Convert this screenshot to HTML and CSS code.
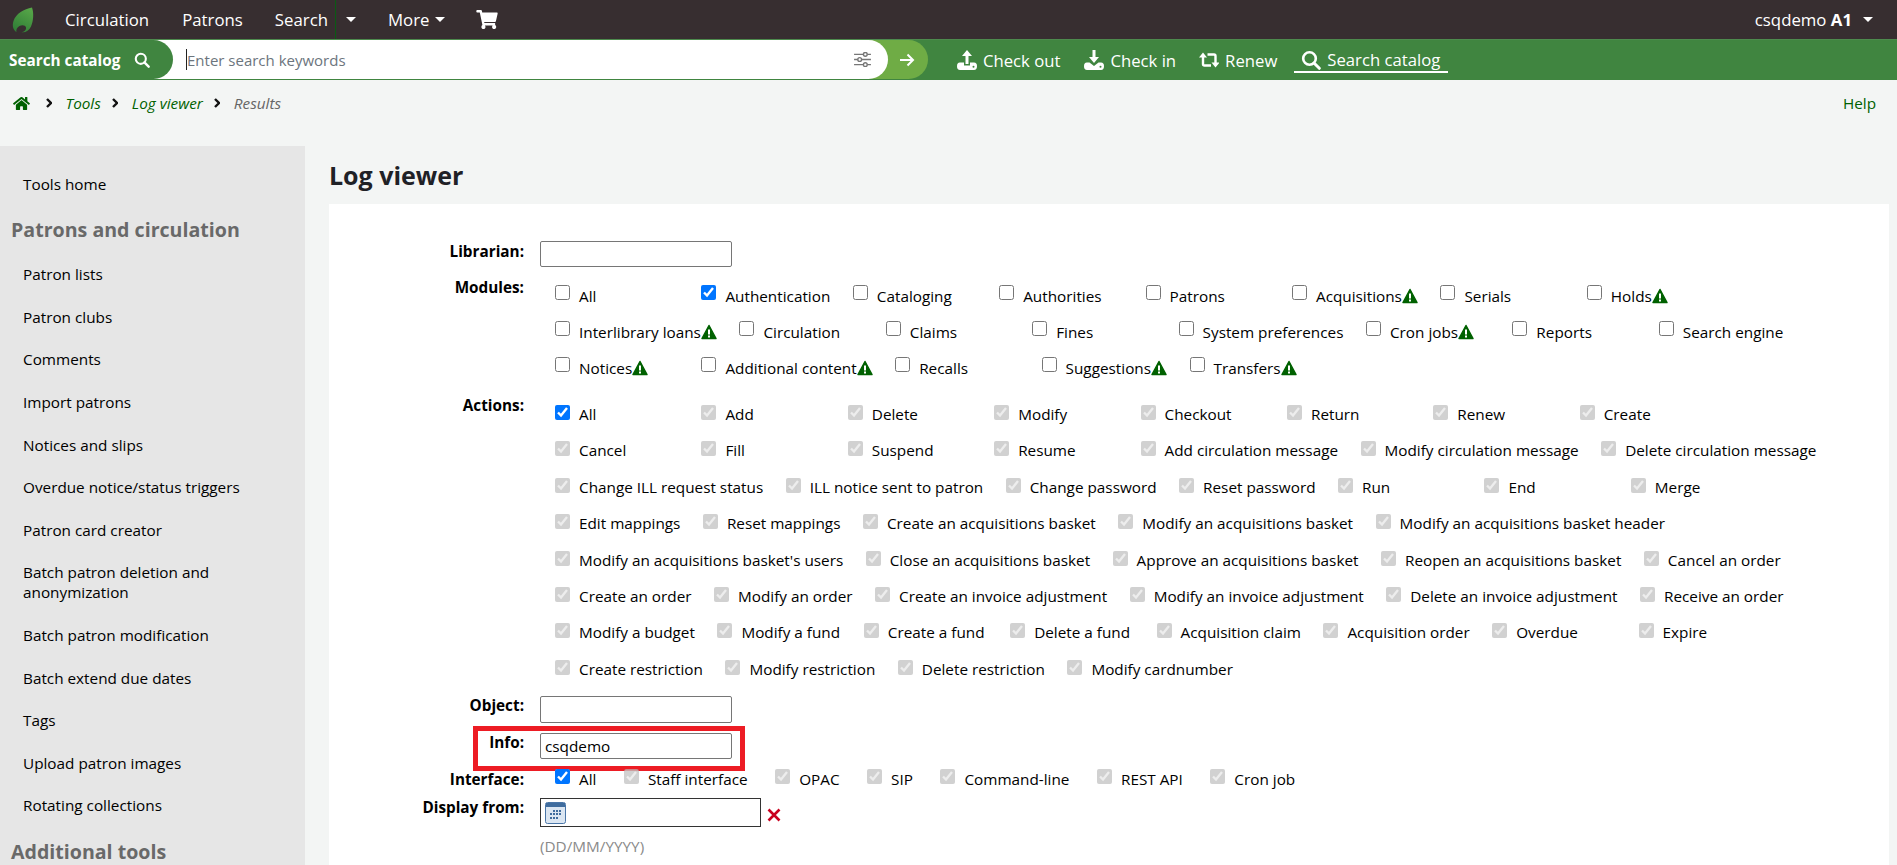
FILE: index.html
```html
<!DOCTYPE html>
<html lang="en">
<head>
  <meta charset="UTF-8" />
  <title>Log viewer</title>
  <link rel="stylesheet" href="styles.css">
</head>
<body>

  <svg class="defs" aria-hidden="true">
    <symbol id="warn" viewBox="0 0 16 16">
      <path d="M8 1.5 15 14.5H1Z" fill="#006100" stroke="#006100" stroke-width="1.5" stroke-linejoin="round"/>
      <rect x="7" y="5.5" width="2" height="5" fill="#fff"/>
      <rect x="7" y="11.5" width="2" height="2" fill="#fff"/>
    </symbol>
    <symbol id="glass" viewBox="0 0 20 20">
      <circle cx="8.5" cy="8.5" r="6.3" fill="none" stroke="#fff" stroke-width="2.6"/>
      <path d="M13 13 18.3 18.3" stroke="#fff" stroke-width="3" stroke-linecap="round"/>
    </symbol>
    <symbol id="caret" viewBox="0 0 10 5">
      <path d="M0 0H10L5 5Z" fill="#fff"/>
    </symbol>
    <symbol id="chevron" viewBox="0 0 6 10">
      <path d="M1 1 5 5 1 9" fill="none" stroke="#111" stroke-width="2.4"/>
    </symbol>
  </svg>

  <!-- Top navigation -->
  <nav class="topnav">
    <svg class="logo" viewBox="0 0 22 26">
      <defs>
        <linearGradient id="leaf" x1="0.7" y1="0" x2="0.2" y2="1">
          <stop offset="0" stop-color="#56a548"/>
          <stop offset="1" stop-color="#2f7d36"/>
        </linearGradient>
      </defs>
      <path d="M20 0.5C22 6 21.5 14 19 19.5 17 24 12.5 26 9.5 25 12 25 14.5 23 14 20.5 13.5 18 10 17.5 7.5 19 5 20.500 3.800 23 4.500 25 1 23 0 18.500 1.500 14 4 6.500 12 2 20 0.500Z" fill="url(#leaf)"/>
    </svg>
    <a class="nav-link nav-circ">Circulation</a>
    <a class="nav-link nav-patrons">Patrons</a>
    <a class="nav-link nav-search">Search</a>
    <span class="nav-split"><svg class="caret"><use href="#caret"/></svg></span>
    <a class="nav-link nav-more">More<svg class="caret"><use href="#caret"/></svg></a>
    <svg class="cart" viewBox="0 0 576 512"><path d="M528.12 301.319l47.273-208C578.806 78.301 567.391 64 551.99 64H159.208l-9.166-44.81C147.758 8.021 137.93 0 126.529 0H24C10.745 0 0 10.745 0 24v16c0 13.255 10.745 24 24 24h69.883l70.248 343.435C147.325 417.1 136 435.222 136 456c0 30.928 25.072 56 56 56s56-25.072 56-56c0-15.674-6.447-29.835-16.824-40h209.647C430.447 426.165 424 440.326 424 456c0 30.928 25.072 56 56 56s56-25.072 56-56c0-22.172-12.888-41.332-31.579-50.405l5.517-24.276c3.413-15.018-8.002-29.319-23.403-29.319H218.117l-6.545-32h293.145c11.206 0 20.92-7.754 23.403-18.681z" fill="#fff"/></svg>
    <a class="nav-user">csqdemo <b>A1</b><svg class="caret"><use href="#caret"/></svg></a>
  </nav>

  <!-- Search bar -->
  <div class="searchbar">
    <div class="search-pill">
      <div class="search-field">
        <div class="search-tab">Search catalog<svg class="glass-sm"><use href="#glass"/></svg></div>
        <span class="search-caret"></span>
        <span class="search-hint">Enter search keywords</span>
        <svg class="sliders" viewBox="0 0 18 16">
          <g fill="#fff" stroke="#777" stroke-width="1.5">
            <path d="M0 2.500H18M0 8H18M0 13.500H18"/>
            <circle cx="12" cy="2.500" r="2"/>
            <circle cx="6" cy="8" r="2"/>
            <circle cx="12" cy="13.500" r="2"/>
          </g>
        </svg>
      </div>
      <svg class="go" viewBox="0 0 16 14"><path d="M1 7H14M8.500 1.500 14 7 8.500 12.500" fill="none" stroke="#fff" stroke-width="2"/></svg>
    </div>
    <a class="quick q-out">
      <svg class="qicon" viewBox="0 0 20 20"><path d="M10 0 15 6H11.500V14H8.500V6H5Z" fill="#fff"/><path d="M3 12.500H7V15.500H13V12.500H17Q20 12.500 20 16.200T17 20H3Q0 20 0 16.200T3 12.500Z" fill="#fff"/><circle cx="16.500" cy="16.800" r="1" fill="#408540"/></svg>
      Check out</a>
    <a class="quick q-in">
      <svg class="qicon" viewBox="0 0 20 20"><path d="M8.500 0H11.500V7H15L10 13 5 7H8.500Z" fill="#fff"/><path d="M3 12.500H5.500L10 16 14.500 12.500H17Q20 12.500 20 16.200T17 20H3Q0 20 0 16.200T3 12.500Z" fill="#fff"/><circle cx="16.500" cy="16.800" r="1" fill="#408540"/></svg>
      Check in</a>
    <a class="quick q-renew">
      <svg class="qicon" viewBox="0 0 20 16"><path d="M4 4V12Q4 13.500 5.500 13.500H12M8.500 2.500H15Q16.500 2.500 16.500 4V12" fill="none" stroke="#fff" stroke-width="2.400"/><path d="M0 5.500 4 0.500 8 5.500ZM12.500 10.500 16.500 15.500 20.500 10.500Z" fill="#fff"/></svg>
      Renew</a>
    <a class="quick q-search">
      <svg class="qicon"><use href="#glass"/></svg>
      Search catalog</a>
  </div>

  <!-- Breadcrumbs -->
  <div class="crumbs">
    <svg class="home" viewBox="0 0 576 512"><path d="M280.37 148.26L96 300.11V464a16 16 0 0 0 16 16l112.06-.29a16 16 0 0 0 15.92-16V368a16 16 0 0 1 16-16h64a16 16 0 0 1 16 16v95.64a16 16 0 0 0 16 16.05L464 480a16 16 0 0 0 16-16V300L295.67 148.26a12.19 12.19 0 0 0-15.3 0zM571.6 251.47L488 182.56V44.05a12 12 0 0 0-12-12h-56a12 12 0 0 0-12 12v72.61L318.47 43a48 48 0 0 0-61 0L4.34 251.47a12 12 0 0 0-1.6 16.9l25.5 31A12 12 0 0 0 45.15 301l235.22-193.74a12.19 12.19 0 0 1 15.3 0L530.9 301a12 12 0 0 0 16.9-1.6l25.5-31a12 12 0 0 0-1.7-16.93z" fill="#006100"/></svg>
    <svg class="chev"><use href="#chevron"/></svg>
    <a>Tools</a>
    <svg class="chev"><use href="#chevron"/></svg>
    <a>Log viewer</a>
    <svg class="chev"><use href="#chevron"/></svg>
    <span class="crumb-last">Results</span>
    <a class="help">Help</a>
  </div>

  <div class="page">

    <!-- Sidebar -->
    <aside class="sidebar">
      <ul>
        <li>Tools home</li>
      </ul>
      <h5>Patrons and circulation</h5>
      <ul>
        <li>Patron lists</li>
        <li>Patron clubs</li>
        <li>Comments</li>
        <li>Import patrons</li>
        <li>Notices and slips</li>
        <li>Overdue notice/status triggers</li>
        <li>Patron card creator</li>
        <li>Batch patron deletion and anonymization</li>
        <li>Batch patron modification</li>
        <li>Batch extend due dates</li>
        <li>Tags</li>
        <li>Upload patron images</li>
        <li>Rotating collections</li>
      </ul>
      <h5>Additional tools</h5>
    </aside>

    <main class="main">
      <h1>Log viewer</h1>
      <div class="panel">

        <div class="field f-librarian">
          <label>Librarian:</label>
          <input class="text" type="text">
        </div>

        <div class="field f-modules">
          <label>Modules:</label>
          <div class="opts">
            <div class="opt-row">
              <span class="opt"><input type="checkbox">All</span>
              <span class="opt"><input type="checkbox" checked>Authentication</span>
              <span class="opt"><input type="checkbox">Cataloging</span>
              <span class="opt"><input type="checkbox">Authorities</span>
              <span class="opt"><input type="checkbox">Patrons</span>
              <span class="opt"><input type="checkbox">Acquisitions<svg class="warn"><use href="#warn"/></svg></span>
              <span class="opt"><input type="checkbox">Serials</span>
              <span class="opt"><input type="checkbox">Holds<svg class="warn"><use href="#warn"/></svg></span>
            </div>
            <div class="opt-row">
              <span class="opt"><input type="checkbox">Interlibrary loans<svg class="warn"><use href="#warn"/></svg></span>
              <span class="opt"><input type="checkbox">Circulation</span>
              <span class="opt"><input type="checkbox">Claims</span>
              <span class="opt"><input type="checkbox">Fines</span>
              <span class="opt"><input type="checkbox">System preferences</span>
              <span class="opt"><input type="checkbox">Cron jobs<svg class="warn"><use href="#warn"/></svg></span>
              <span class="opt"><input type="checkbox">Reports</span>
              <span class="opt"><input type="checkbox">Search engine</span>
            </div>
            <div class="opt-row">
              <span class="opt"><input type="checkbox">Notices<svg class="warn"><use href="#warn"/></svg></span>
              <span class="opt"><input type="checkbox">Additional content<svg class="warn"><use href="#warn"/></svg></span>
              <span class="opt"><input type="checkbox">Recalls</span>
              <span class="opt"><input type="checkbox">Suggestions<svg class="warn"><use href="#warn"/></svg></span>
              <span class="opt"><input type="checkbox">Transfers<svg class="warn"><use href="#warn"/></svg></span>
            </div>
          </div>
        </div>

        <div class="field f-actions">
          <label>Actions:</label>
          <div class="opts">
            <div class="opt-row">
              <span class="opt"><input type="checkbox" checked>All</span>
              <span class="opt"><input type="checkbox" checked disabled>Add</span>
              <span class="opt"><input type="checkbox" checked disabled>Delete</span>
              <span class="opt"><input type="checkbox" checked disabled>Modify</span>
              <span class="opt"><input type="checkbox" checked disabled>Checkout</span>
              <span class="opt"><input type="checkbox" checked disabled>Return</span>
              <span class="opt"><input type="checkbox" checked disabled>Renew</span>
              <span class="opt"><input type="checkbox" checked disabled>Create</span>
            </div>
            <div class="opt-row">
              <span class="opt"><input type="checkbox" checked disabled>Cancel</span>
              <span class="opt"><input type="checkbox" checked disabled>Fill</span>
              <span class="opt"><input type="checkbox" checked disabled>Suspend</span>
              <span class="opt"><input type="checkbox" checked disabled>Resume</span>
              <span class="opt"><input type="checkbox" checked disabled>Add circulation message</span>
              <span class="opt"><input type="checkbox" checked disabled>Modify circulation message</span>
              <span class="opt"><input type="checkbox" checked disabled>Delete circulation message</span>
            </div>
            <div class="opt-row">
              <span class="opt"><input type="checkbox" checked disabled>Change ILL request status</span>
              <span class="opt"><input type="checkbox" checked disabled>ILL notice sent to patron</span>
              <span class="opt"><input type="checkbox" checked disabled>Change password</span>
              <span class="opt"><input type="checkbox" checked disabled>Reset password</span>
              <span class="opt"><input type="checkbox" checked disabled>Run</span>
              <span class="opt"><input type="checkbox" checked disabled>End</span>
              <span class="opt"><input type="checkbox" checked disabled>Merge</span>
            </div>
            <div class="opt-row">
              <span class="opt"><input type="checkbox" checked disabled>Edit mappings</span>
              <span class="opt"><input type="checkbox" checked disabled>Reset mappings</span>
              <span class="opt"><input type="checkbox" checked disabled>Create an acquisitions basket</span>
              <span class="opt"><input type="checkbox" checked disabled>Modify an acquisitions basket</span>
              <span class="opt"><input type="checkbox" checked disabled>Modify an acquisitions basket header</span>
            </div>
            <div class="opt-row">
              <span class="opt"><input type="checkbox" checked disabled>Modify an acquisitions basket's users</span>
              <span class="opt"><input type="checkbox" checked disabled>Close an acquisitions basket</span>
              <span class="opt"><input type="checkbox" checked disabled>Approve an acquisitions basket</span>
              <span class="opt"><input type="checkbox" checked disabled>Reopen an acquisitions basket</span>
              <span class="opt"><input type="checkbox" checked disabled>Cancel an order</span>
            </div>
            <div class="opt-row">
              <span class="opt"><input type="checkbox" checked disabled>Create an order</span>
              <span class="opt"><input type="checkbox" checked disabled>Modify an order</span>
              <span class="opt"><input type="checkbox" checked disabled>Create an invoice adjustment</span>
              <span class="opt"><input type="checkbox" checked disabled>Modify an invoice adjustment</span>
              <span class="opt"><input type="checkbox" checked disabled>Delete an invoice adjustment</span>
              <span class="opt"><input type="checkbox" checked disabled>Receive an order</span>
            </div>
            <div class="opt-row">
              <span class="opt"><input type="checkbox" checked disabled>Modify a budget</span>
              <span class="opt"><input type="checkbox" checked disabled>Modify a fund</span>
              <span class="opt"><input type="checkbox" checked disabled>Create a fund</span>
              <span class="opt"><input type="checkbox" checked disabled>Delete a fund</span>
              <span class="opt"><input type="checkbox" checked disabled>Acquisition claim</span>
              <span class="opt"><input type="checkbox" checked disabled>Acquisition order</span>
              <span class="opt"><input type="checkbox" checked disabled>Overdue</span>
              <span class="opt"><input type="checkbox" checked disabled>Expire</span>
            </div>
            <div class="opt-row">
              <span class="opt"><input type="checkbox" checked disabled>Create restriction</span>
              <span class="opt"><input type="checkbox" checked disabled>Modify restriction</span>
              <span class="opt"><input type="checkbox" checked disabled>Delete restriction</span>
              <span class="opt"><input type="checkbox" checked disabled>Modify cardnumber</span>
            </div>
          </div>
        </div>

        <div class="field f-object">
          <label>Object:</label>
          <input class="text" type="text">
        </div>

        <div class="field f-info">
          <label>Info:</label>
          <input class="text" type="text" value="csqdemo">
          <div class="highlight"></div>
        </div>

        <div class="field f-interface">
          <label>Interface:</label>
          <div class="opts">
            <div class="opt-row iface">
              <span class="opt"><input type="checkbox" checked>All</span>
              <span class="opt"><input type="checkbox" checked disabled>Staff interface</span>
              <span class="opt"><input type="checkbox" checked disabled>OPAC</span>
              <span class="opt"><input type="checkbox" checked disabled>SIP</span>
              <span class="opt"><input type="checkbox" checked disabled>Command-line</span>
              <span class="opt"><input type="checkbox" checked disabled>REST API</span>
              <span class="opt"><input type="checkbox" checked disabled>Cron job</span>
            </div>
          </div>
        </div>

        <div class="field f-date">
          <label>Display from:</label>
          <div class="date-box">
            <svg class="cal" viewBox="0 0 21 22">
              <rect x="0.500" y="0.500" width="20" height="21" rx="2" fill="#dbe6f2" stroke="#4a76a8"/>
              <rect x="1" y="1" width="19" height="4" fill="#3f6c9e"/>
              <g fill="#3f6c9e">
                <rect x="8" y="8" width="2" height="2"/><rect x="11" y="8" width="2" height="2"/><rect x="14" y="8" width="2" height="2"/>
                <rect x="5" y="11" width="2" height="2"/><rect x="8" y="11" width="2" height="2"/><rect x="11" y="11" width="2" height="2"/><rect x="14" y="11" width="2" height="2"/>
                <rect x="5" y="15" width="2" height="2"/><rect x="8" y="15" width="2" height="2"/><rect x="11" y="15" width="2" height="2"/>
              </g>
            </svg>
          </div>
          <svg class="clear" viewBox="0 0 14 14"><path d="M1.500 1.500 12.500 12.500M12.500 1.500 1.500 12.500" stroke="#c9001e" stroke-width="2.600"/></svg>
        </div>
        <div class="hint">(DD/MM/YYYY)</div>

      </div>
    </main>

  </div>

</body>
</html>
```

FILE: styles.css
```css
html, body {
  margin: 0;
  padding: 0;
  height: 865px;
  overflow: hidden;
}

body {
  font-family: "Open Sans", sans-serif;
  font-size: 15.3px;
  color: #000;
  background-color: #f3f5f4;
}

.defs {
  display: none;
}

/* top navigation */
.topnav {
  display: flex;
  align-items: center;
  height: 39px;
  background-color: #372e30;
  color: #fff;
  font-size: 16.8px;
}

.logo {
  width: 22px;
  height: 26px;
  margin-left: 12px;
}

.nav-link {
  white-space: nowrap;
}

.nav-circ { margin-left: 31px; }
.nav-patrons { margin-left: 33px; }
.nav-search { margin-left: 32px; }

.nav-split {
  display: flex;
  align-items: center;
  align-self: stretch;
  margin-left: 7px;
  padding-left: 10px;
  border-left: 1px solid #0a5c14;
}

.nav-more {
  display: flex;
  align-items: center;
  margin-left: 32px;
}

.nav-more .caret { margin-left: 6px; }

.caret {
  width: 10px;
  height: 5px;
}

.cart {
  width: 22px;
  height: 19px;
  margin-left: 31px;
  margin-top: -1px;
}

.nav-user {
  display: flex;
  align-items: center;
  margin-left: auto;
  margin-right: 24px;
  white-space: pre;
}

.nav-user .caret { margin-left: 11px; }

/* search bar */
.searchbar {
  display: flex;
  align-items: center;
  height: 41px;
  background-color: #408540;
  color: #fff;
  border-top: 1px solid #4d8a4d;
  box-sizing: border-box;
}

.search-pill {
  display: flex;
  align-items: center;
  width: 928px;
  height: 39px;
  margin-top: -1px;
  background-color: #6fac45;
  border-radius: 0 20px 20px 0;
}

.search-field {
  display: flex;
  align-items: center;
  width: 888px;
  height: 39px;
  background-color: #fff;
  border-radius: 0 20px 20px 0;
}

.search-tab {
  display: flex;
  align-items: center;
  width: 173px;
  height: 39px;
  padding-left: 9px;
  box-sizing: border-box;
  background-color: #408540;
  border-radius: 0 20px 20px 0;
  font-weight: 700;
  white-space: nowrap;
}

.glass-sm {
  width: 16px;
  height: 16px;
  margin-left: 14px;
}

.search-caret {
  width: 1px;
  height: 21px;
  margin-left: 13px;
  background-color: #222;
}

.search-hint {
  color: #6c757d;
  font-size: 15px;
}

.sliders {
  width: 17px;
  height: 15px;
  margin-left: auto;
  margin-right: 17px;
}

.go {
  width: 16px;
  height: 14px;
  margin-left: 11px;
}

.quick {
  display: flex;
  align-items: center;
  height: 31px;
  font-size: 16.7px;
  white-space: nowrap;
}

.qicon {
  width: 20px;
  height: 20px;
  margin-right: 6px;
}

.q-out { margin-left: 29px; }
.q-in { margin-left: 24px; }
.q-renew { margin-left: 23px; }

.q-search {
  align-self: flex-start;
  height: 23px;
  margin-top: 8px;
  margin-left: 17px;
  padding: 0 8px 0 7px;
  border-bottom: 2px solid #fff;
}

/* breadcrumbs */
.crumbs {
  display: flex;
  align-items: center;
  height: 46px;
  padding: 0 21px 0 13px;
  font-style: italic;
  margin-bottom: 20px;
}

.crumbs a {
  color: #006100;
}

.home {
  width: 17px;
  height: 15px;
}

.chev {
  width: 6px;
  height: 10px;
  margin: 0 13.5px 0 11.5px;
}

.home + .chev {
  margin-left: 16px;
}

.crumb-last {
  color: #666;
}

.crumbs .help {
  margin-left: auto;
  font-style: normal;
}

/* page columns */
.page {
  display: flex;
  align-items: flex-start;
  padding-right: 8px;
}

.sidebar {
  flex: 0 0 305px;
  height: 730px;
  padding-top: 16.7px;
  box-sizing: border-box;
  background-color: #e6e6e6;
}

.sidebar ul {
  list-style: none;
  margin: 0;
  padding: 0 30px 0 23px;
}

.sidebar li {
  padding: 11px 0 11.6px;
  line-height: 20px;
}

.sidebar h5 {
  margin: 1px 0 0 11px;
  height: 47px;
  font-size: 19.6px;
  line-height: 47px;
  font-weight: 700;
  color: #696969;
  white-space: nowrap;
}

.main {
  flex: 1;
  margin-left: 24px;
}

.main h1 {
  margin: 0;
  height: 58px;
  font-size: 25px;
  line-height: 58px;
  font-weight: 700;
  color: #1f2126;
}

.panel {
  height: 680px;
  padding-top: 37px;
  box-sizing: border-box;
  background-color: #fff;
}

/* form rows */
.field {
  display: flex;
  align-items: flex-start;
  position: relative;
}

.field > label {
  flex: 0 0 195px;
  margin-right: 16px;
  line-height: 18px;
  font-weight: 700;
  text-align: right;
  white-space: nowrap;
}

.text {
  width: 192px;
  height: 26px;
  padding: 0 4px;
  box-sizing: border-box;
  border: 1px solid #767676;
  border-radius: 2px;
  background-color: #fff;
  font: inherit;
  outline: none;
}

.f-librarian > label { margin-top: 1px; }

.f-modules { margin-top: 11px; }
.f-actions { margin-top: 10px; }
.f-object { margin-top: 9px; }
.f-object .text { height: 27px; }
.f-info { margin-top: 10px; }
.f-interface { margin-top: 9px; }
.f-interface > label { margin-top: 2px; }
.f-date { margin-top: 8px; }

.opts {
  padding-left: 15px;
}

.opt-row {
  display: flex;
  height: 36px;
}

.f-actions .opt-row {
  height: 36.4px;
}

.opt {
  display: flex;
  align-items: flex-start;
  box-sizing: border-box;
  min-width: 146.4px;
  padding-right: 22.5px;
  line-height: 36px;
  white-space: nowrap;
}

.opt input {
  width: 15px;
  height: 15px;
  margin: 7px 9px 0 0;
  flex: none;
}

.f-actions .opt input {
  margin-top: 9px;
}

.warn {
  width: 16px;
  height: 16px;
  margin-top: 10px;
}

/* the interface checkboxes sit closer together */
.opt-row.iface {
  height: 22px;
}

.iface .opt {
  min-width: 0;
  padding-right: 27.5px;
  line-height: 22px;
}

.iface .opt input {
  margin-top: 1px;
}

/* red annotation drawn round the Info row */
.highlight {
  position: absolute;
  left: 144px;
  top: -7px;
  width: 272px;
  height: 45px;
  box-sizing: border-box;
  border: 5px solid #ed1c24;
  pointer-events: none;
}

.date-box {
  display: flex;
  align-items: center;
  width: 221px;
  height: 29px;
  padding-left: 4px;
  box-sizing: border-box;
  border: 1px solid #333;
}

.cal {
  width: 21px;
  height: 22px;
}

.clear {
  width: 14px;
  height: 14px;
  margin: 10px 0 0 6px;
}

.hint {
  margin: 9px 0 0 211px;
  line-height: 20px;
  color: #8a8a8a;
}
```
